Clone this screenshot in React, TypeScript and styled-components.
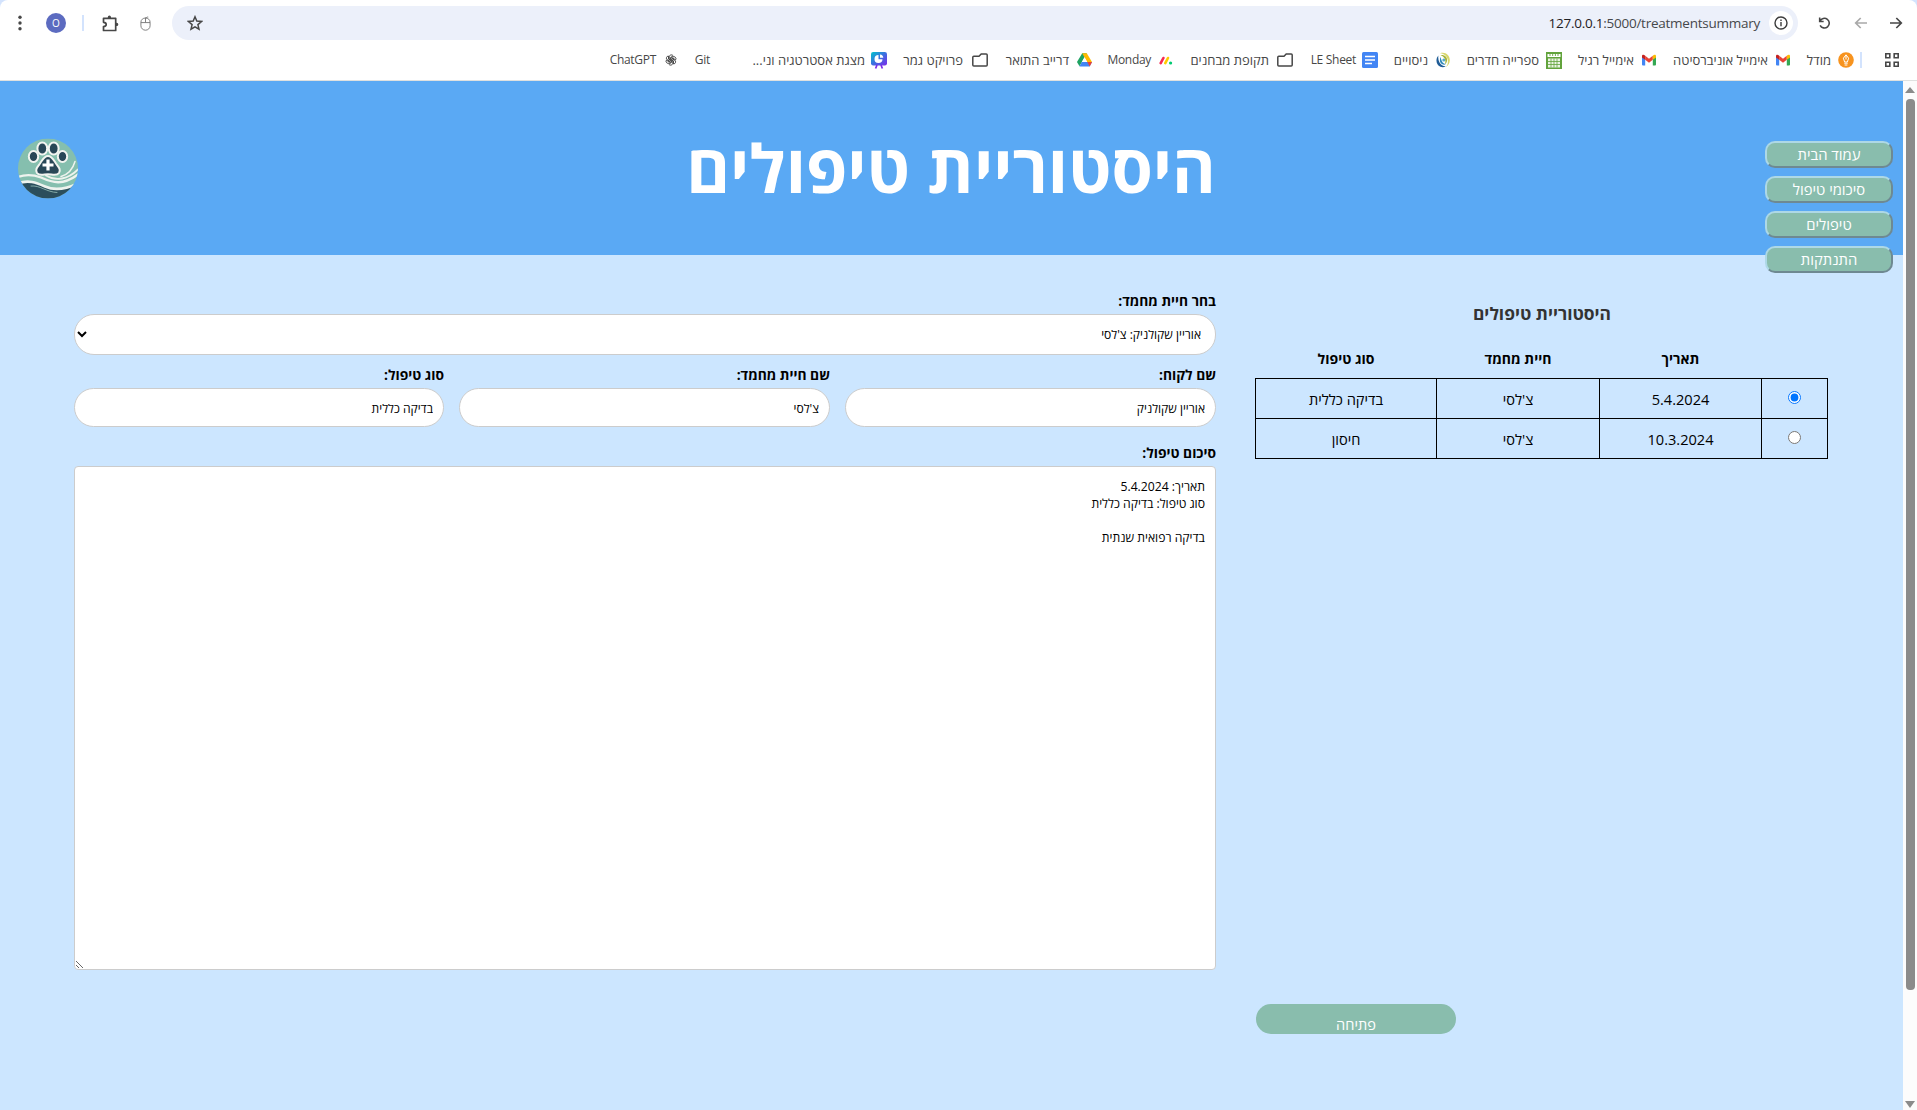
import React from "react";
import styled, { createGlobalStyle } from "styled-components";

const Global = createGlobalStyle`
  *, *::before, *::after { box-sizing: border-box; }
  html, body { margin: 0; padding: 0; }
  body { background: #cce6ff; overflow: hidden; font-family: "Open Sans", "Noto Sans", "DejaVu Sans", sans-serif; }
  button, input, select, textarea { font-family: inherit; }
`;

/* ---------- browser chrome ---------- */

const Window = styled.div`
  direction: rtl;
  width: 1917px;
  height: 1110px;
  display: flex;
  flex-direction: column;
  overflow: hidden;
  background: #d3e3fd;
`;

const Chrome = styled.header`
  height: 81px;
  flex: none;
  background: #fff;
  border-bottom: 1px solid #dfe1e0;
  border-radius: 8px 8px 0 0;
`;

const Toolbar = styled.div`
  height: 46px;
  display: flex;
  align-items: center;
  padding: 0 12px 0 11px;
`;

const ToolIcon = styled.span<{ $w: number; $gap?: number }>`
  display: flex;
  justify-content: center;
  flex: none;
  width: ${(p) => p.$w}px;
  margin-left: ${(p) => p.$gap ?? 0}px;
`;

const Omnibox = styled.div`
  flex: 1;
  height: 34px;
  border-radius: 17px;
  background: #ecf0fa;
  display: flex;
  align-items: center;
  padding: 0 5px 0 15px;
  margin-left: 17px;
`;

const InfoBadge = styled.span`
  width: 24px;
  height: 24px;
  border-radius: 50%;
  background: #fff;
  display: flex;
  align-items: center;
  justify-content: center;
`;

const Url = styled.span`
  direction: ltr;
  flex: 1;
  text-align: right;
  padding-right: 9px;
  font-size: 13.5px;
  color: #46484b;
  letter-spacing: -0.25px;
  b { font-weight: 400; color: #1f2023; }
`;

const Avatar = styled.span`
  width: 20px;
  height: 20px;
  margin-left: 17px;
  flex: none;
  border-radius: 50%;
  background: #5c6bc0;
  color: #fff;
  font-size: 10px;
  line-height: 20px;
  text-align: center;
`;

const Divider = styled.i<{ $m: string }>`
  width: 2px;
  height: 16px;
  flex: none;
  background: #d3e3fd;
  margin: ${(p) => p.$m};
`;

const Bookmarks = styled.nav`
  height: 28px;
  display: flex;
  align-items: center;
  padding-right: 17px;
`;

const Bookmark = styled.a<{ $w: number; $gap: number }>`
  width: ${(p) => p.$w}px;
  flex: none;
  display: flex;
  align-items: center;
  gap: ${(p) => p.$gap}px;
  color: #474747;
  white-space: nowrap;
`;

const BookmarkIcon = styled.span`
  width: 16px;
  flex: none;
  display: flex;
  justify-content: center;
`;

const BookmarkText = styled.span<{ $latin?: boolean }>`
  font-size: ${(p) => (p.$latin ? 12 : 13)}px;
  letter-spacing: ${(p) => (p.$latin ? -0.3 : 0)}px;
  line-height: 18px;
`;

/* ---------- page ---------- */

const Viewport = styled.div`
  flex: 1;
  min-height: 0;
  display: flex;
`;

const Page = styled.main`
  flex: 1;
  background: #cce6ff;
  display: flex;
  flex-direction: column;
`;

const Banner = styled.div`
  position: relative;
  height: 174px;
  flex: none;
  background: #5aa9f4;
  display: flex;
  align-items: center;
  justify-content: center;
`;

const Title = styled.h1`
  margin: 0;
  padding-left: 0;
  padding-right: 1px;
  color: #fff;
  font-size: 66.7px;
  font-weight: 700;
  line-height: 90px;
  white-space: nowrap;
`;

const Menu = styled.div`
  position: absolute;
  top: 60px;
  right: 10px;
  display: flex;
  flex-direction: column;
  gap: 8px;
`;

const MenuButton = styled.button`
  width: 128px;
  height: 27px;
  padding: 0;
  border: 2px outset lightblue;
  border-radius: 10px;
  background: #89bdad;
  color: #fff;
  font-size: 14.8px;
  line-height: 23px;
`;

const Logo = styled.div`
  position: absolute;
  left: 18px;
  top: 57px;
  width: 60px;
  height: 60px;
`;

const Content = styled.div`
  display: flex;
  justify-content: space-between;
  padding: 32px 75px 0 74px;
`;

const History = styled.section`
  width: 572px;
  height: 747px;
  display: flex;
  flex-direction: column;
`;

const HistoryTitle = styled.h2`
  margin: 14px 0 0;
  text-align: center;
  font-size: 17.4px;
  line-height: 24px;
  font-weight: 700;
  color: #333;
`;

const Table = styled.table`
  margin-top: 14px;
  width: 572px;
  table-layout: fixed;
  border-collapse: collapse;
  font-size: 14px;
  color: #000;
`;

const Th = styled.th`
  height: 39px;
  padding: 2px 0 0;
  font-weight: 700;
  line-height: 20px;
`;

const Td = styled.td`
  height: 40px;
  padding: 2px 0 0;
  border: 1px solid #000;
  text-align: center;
  font-size: 14.6px;
  line-height: 20px;
`;

const Radio = styled.input`
  display: block;
  width: 13px;
  height: 13px;
  margin: 0 auto 3px;
`;

const OpenButton = styled.button`
  margin: auto auto 0 0;
  width: 200px;
  height: 30px;
  padding: 9px 0 0;
  border: 0;
  border-radius: 15px;
  background: #89bdad;
  color: #fff;
  font-size: 14.6px;
  line-height: 20px;
`;

const Form = styled.form`
  width: 1142px;
  display: flex;
  flex-direction: column;
`;

const Label = styled.label`
  display: block;
  height: 27px;
  line-height: 27px;
  font-size: 13.8px;
  font-weight: 700;
  color: #000;
  white-space: nowrap;
`;

const Select = styled.select`
  height: 41px;
  width: 100%;
  padding: 0 10px;
  border: 1px solid #ccc;
  border-radius: 20px;
  background: #fff;
  color: #000;
  font-size: 12.1px;
`;

const Fields = styled.div`
  display: grid;
  grid-template-columns: 371px 371px 370px;
  column-gap: 15px;
  margin: 6px 0 12px;
`;

const Field = styled.div`
  min-width: 0;
`;

const Input = styled.input`
  display: block;
  width: 100%;
  height: 39px;
  padding: 1px 10px 0;
  border: 1px solid #ccc;
  border-radius: 20px;
  background: #fff;
  color: #000;
  font-size: 12.1px;
`;

const Summary = styled.textarea`
  height: 504px;
  padding: 11px 10px 10px;
  border: 1px solid #ccc;
  border-radius: 4px;
  background: #fff;
  color: #000;
  font-size: 12.2px;
  line-height: 17px;
  outline: none;
`;

const ScrollTrack = styled.div`
  width: 14px;
  flex: none;
  background: #fcfcfc;
  display: flex;
  flex-direction: column;
  align-items: center;
  padding: 6px 0 2px;
`;

const Thumb = styled.div`
  width: 9px;
  height: 891px;
  margin: 6px 0 auto;
  border-radius: 4px;
  background: #8b8b8b;
`;

/* ---------- drawings ---------- */

const ink = "#474747";

const Gmail = () => (
  <svg width="14" height="12" viewBox="0 0 14 11">
    <path d="M0 1.5V10a1 1 0 0 0 1 1h2.2V4z" fill="#4285f4" />
    <path d="M14 1.500V10a1 1 0 0 1-1 1h-2.200V4z" fill="#34a853" />
    <path d="M3.200 1.200 7 4.200l3.800-3v4L7 8.200l-3.800-3z" fill="#ea4335" />
    <path d="M0 1.500C0 .2 1.600-.4 3.200 1.200v4L0 2.900z" fill="#c5221f" />
    <path d="M14 1.500C14 .2 12.400-.4 10.800 1.200v4L14 2.900z" fill="#fbbc04" />
  </svg>
);

const Folder = () => (
  <svg width="16" height="14" viewBox="0 0 16 14" fill="none" stroke={ink} strokeWidth="1.500">
    <path d="M.8 12V4.300q0-1 1-1H7L9.200 1h5q1 0 1 1v10q0 1-1 1H1.800q-1 0-1-1z" />
  </svg>
);

const Moodle = () => (
  <svg width="16" height="16" viewBox="0 0 16 16">
    <circle cx="8" cy="8" r="7.800" fill="#f7931e" />
    <path d="M8 2.800 5.400 6.200 6.600 10h2.800l1.200-3.800zM8 3v4.500" fill="none" stroke="#fff" strokeWidth="1" />
    <path d="M6.300 11.200h3.400M6.600 13h2.800" stroke="#fff" strokeWidth="1" />
  </svg>
);

const Calendar = () => (
  <svg width="16" height="17" viewBox="0 0 16 17">
    <rect width="16" height="17" fill="#62a33c" />
    <path d="M1.500 2h13v3h-13z" fill="#fff" />
    <path d="M4 1v3M6.700 1v3M9.400 1v3M12 1v3" stroke="#62a33c" strokeWidth=".9" />
    <rect x="2" y="6.500" width="12" height="9" fill="#e9f3e2" />
    <path d="M2 9.500h12M2 12.500h12M5 6.500v9M8 6.500v9M11 6.500v9" stroke="#62a33c" strokeWidth=".8" />
  </svg>
);

const Swirl = () => (
  <svg width="14" height="16" viewBox="0 0 14 16">
    <path d="M4 1.200C9.500-.8 14 3.500 13.800 8.500c-.2 3.200-1.800 5.500-4.300 6.700 2-2.200 2.700-4.200 2.300-7C11.300 4.500 8.500 1.800 4 1.200z" fill="#d9d76c" />
    <path d="M4.500 3.200c3.800-.7 6.700 1.800 6.600 5-.1 2-1 3.300-2.200 4 .7-2.200.7-3.800-.3-5.600-.9-1.700-2.200-2.700-4.100-3.400z" fill="#a8b53a" />
    <path d="M2.400 3.500C-.8 7 0 12.800 4.500 14.800c1.800.7 4 .4 5.300-.6-3 0-5-1.300-6.300-3.700C2.300 8.300 2 6 2.400 3.500z" fill="#1f5c96" />
    <path d="M4.800 5c-1.600 2.700-1 6 1.600 7.300 1.200.6 2.500.5 3.400-.2-1.700-.4-3-1.300-3.800-2.700C5.200 8 4.900 6.600 4.800 5z" fill="#2d87b9" />
    <circle cx="7.800" cy="8" r="1.500" fill="#59abc9" />
  </svg>
);

const Docs = () => (
  <svg width="16" height="16" viewBox="0 0 16 16">
    <rect width="16" height="16" rx="1.500" fill="#4285f4" />
    <path d="M3 4.500h10M3 8h10M3 11.500h7" stroke="#fff" strokeWidth="1.500" />
  </svg>
);

const MondayMark = () => (
  <svg width="14" height="9" viewBox="0 0 14 9" strokeLinecap="round" strokeWidth="2.600">
    <path d="M1.700 7.200 4.400 2" stroke="#f62b54" />
    <path d="M6.300 7.200 9 2" stroke="#ffcc00" />
    <circle cx="11.600" cy="7" r="1.600" fill="#00ca72" />
  </svg>
);

const Drive = () => (
  <svg width="15" height="14" viewBox="0 0 15 14">
    <path d="M5.200.3h4.600L5 8.800 2.500 13.200 0 9z" fill="#1ea362" />
    <path d="M5.200.3h4.600L15 9h-4.800z" fill="#ffba00" />
    <path d="M4.800 9H15l-2.300 4.500H2.400z" fill="#4285f4" />
    <path d="M12.700 13.500 15 9h-4.700z" fill="#ea4335" />
    <path d="M7.500 4.300 4.900 9h5.200z" fill="#fff" />
  </svg>
);

const DeckMark = () => (
  <svg width="16" height="17" viewBox="0 0 16 17">
    <defs>
      <linearGradient id="deck" x1="0" y1="0" x2="1" y2="1">
        <stop offset="0" stopColor="#00c4cc" />
        <stop offset=".5" stopColor="#3d6fe0" />
        <stop offset="1" stopColor="#7d2ae8" />
      </linearGradient>
    </defs>
    <rect width="16" height="13.500" rx="2.200" fill="url(#deck)" />
    <path d="M6 13 4.600 16.500M10 13l1.400 3.500" stroke="#7d2ae8" strokeWidth="1.700" />
    <path d="M7.500 3a4 4 0 1 0 4 4.200H7.500z" fill="#fff" />
    <path d="M9 2.400a3.600 3.600 0 0 1 3.300 3.300H9z" fill="#fff" />
  </svg>
);

const GptMark = () => (
  <svg width="12" height="12" viewBox="0 0 14 14" fill="none" stroke="#3d3d3d" strokeWidth="1">
    {[0, 60, 120, 180, 240, 300].map((a) => (
      <path key={a} transform={`rotate(${a} 7 7)`} d="M5 7V3.200a2.400 2.400 0 0 1 4.500-1L6.500 4v3" />
    ))}
  </svg>
);

const PawLogo = () => (
  <svg width="60" height="61" viewBox="0 0 60 60">
    <defs>
      <clipPath id="disc"><circle cx="30" cy="30" r="30" /></clipPath>
    </defs>
    <g clipPath="url(#disc)">
      <rect width="60" height="60" fill="#85bfae" />
      <path d="M0 45c10-4 18-1 27 3s19 4 33-3v15H0z" fill="#2b4e5c" />
      <g fill="none" stroke="#eef3ee" strokeLinecap="round">
        <path d="M0 38.500c8-3 15-2.500 23 .5 12 5.500 22 8 37-3" strokeWidth="2.400" />
        <path d="M0 45c10-4 18-1 27 3s19 3.500 33-3" strokeWidth="2.600" />
        <path d="M28 37c10 6 22 4 32-6" strokeWidth="1.800" />
        <path d="M43 38c7-2 12-8 14-15" strokeWidth="1.500" />
        <path d="M13 47.500c9-1 15 6 26 6.500" strokeWidth=".9" stroke="#8fb6b0" />
      </g>
      <g fill="#294757" stroke="#f2f4f0" strokeWidth="2">
        <path d="M30 17.500c4 0 5.500 4 8 7.500 3 4 5 6 3 9.500-2.500 3.500-7 1.200-11 1.200s-8.500 2.300-11-1.200c-2-3.500 0-5.500 3-9.500 2.500-3.500 4-7.500 8-7.500z" />
        <ellipse cx="24.300" cy="10" rx="4.900" ry="6.100" />
        <ellipse cx="35.700" cy="10" rx="4.900" ry="6.100" />
        <ellipse cx="15.500" cy="18" rx="4.700" ry="5.500" />
        <ellipse cx="44.500" cy="18" rx="4.700" ry="5.500" />
      </g>
      <path d="M30 21v11M24.500 26.500h11" stroke="#fff" strokeWidth="3.200" />
    </g>
  </svg>
);

/* ---------- data ---------- */

type Mark = { text: string; icon?: React.ReactNode; w: number; gap?: number; latin?: boolean };

const marks: Mark[] = [
  { text: "מודל", icon: <Moodle />, w: 63 },
  { text: "אימייל אוניברסיטה", icon: <Gmail />, w: 134 },
  { text: "אימייל רגיל", icon: <Gmail />, w: 95 },
  { text: "ספרייה חדרים", icon: <Calendar />, w: 111 },
  { text: "ניסויים", icon: <Swirl />, w: 73 },
  { text: "LE Sheet", icon: <Docs />, w: 85, gap: 6, latin: true },
  { text: "תקופת מבחנים", icon: <Folder />, w: 119, gap: 8 },
  { text: "Monday", icon: <MondayMark />, w: 82, latin: true },
  { text: "דרייב התואר", icon: <Drive />, w: 104 },
  { text: "פרויקט גמר", icon: <Folder />, w: 101, gap: 9 },
  { text: "מצגת אסטרטגיה וני...", icon: <DeckMark />, w: 177, gap: 6 },
  { text: "Git", w: 31, latin: true },
  { text: "ChatGPT", icon: <GptMark />, w: 80, latin: true },
];

const visits = [
  { date: "5.4.2024", pet: "צ'לסי", kind: "בדיקה כללית" },
  { date: "10.3.2024", pet: "צ'לסי", kind: "חיסון" },
];

const summary = "תאריך: 5.4.2024\nסוג טיפול: בדיקה כללית\n\nבדיקה רפואית שנתית";

export default function App() {
  const [picked, setPicked] = React.useState(0);
  return (
    <Window>
      <Global />
      <Chrome>
        <Toolbar>
          <ToolIcon $w={18} $gap={17}>
            <svg width="14" height="12" viewBox="0 0 14 12" fill="none" stroke={ink} strokeWidth="1.700"><path d="M1 6h11M7.300 1 12.300 6l-5 5" /></svg>
          </ToolIcon>
          <ToolIcon $w={18} $gap={19}>
            <svg width="14" height="12" viewBox="0 0 14 12" fill="none" stroke="#a9a9a9" strokeWidth="1.700"><path d="M13 6H2M6.700 1 1.700 6l5 5" /></svg>
          </ToolIcon>
          <ToolIcon $w={18} $gap={17}>
            <svg width="13" height="14" viewBox="0 0 14 14" fill="none" stroke={ink} strokeWidth="1.700"><path d="M1.800 1v4.300h4.300M2.200 5A5.200 5.200 0 1 1 2.300 9.500" /></svg>
          </ToolIcon>
          <Omnibox>
            <InfoBadge>
              <svg width="14" height="14" viewBox="0 0 14 14" fill="none" stroke="#3c3c3c" strokeWidth="1.400"><circle cx="7" cy="7" r="6" /><path d="M7 6v4.200M7 3.500v1.500" /></svg>
            </InfoBadge>
            <Url><b>127.0.0.1</b>:5000/treatmentsummary</Url>
            <svg width="16" height="16" viewBox="0 0 16 16" fill="none" stroke={ink} strokeWidth="1.500"><path d="m8 1.800 1.800 4.300 4.700.4-3.600 3.100 1.100 4.600L8 11.800l-4 2.400 1.100-4.600-3.600-3.100 4.700-.4z" /></svg>
          </Omnibox>
          <ToolIcon $w={20} $gap={15}>
            <svg width="11" height="15" viewBox="0 0 12 16" fill="none" stroke="#777" strokeWidth="1"><path d="M1 7h10v3.500a5 4.800 0 0 1-10 0V6.500a5 4.500 0 0 1 10 0V7M6 7V1.500M6 3.500a2.500 2.500 0 0 1 3-2.500" /></svg>
          </ToolIcon>
          <ToolIcon $w={20} $gap={16}>
            <svg width="17" height="17" viewBox="0 0 17 17" fill="none" stroke={ink} strokeWidth="1.700"><path d="M1.500 3.300h12.200v12.200H1.500v-4q2.700-.2 2.700-2.100T1.500 7.300z" strokeLinejoin="round" /><path d="M5.800 3V2.200a1.600 1.600 0 0 1 3.200 0V3zM14 7.800h.7a1.600 1.600 0 0 1 0 3.200H14z" fill={ink} stroke="none" /></svg>
          </ToolIcon>
          <Divider $m="0 0 0 16px" />
          <Avatar>O</Avatar>
          <ToolIcon $w={18}>
            <svg width="4" height="16" viewBox="0 0 4 16" fill={ink}>
              <circle cx="2" cy="2.200" r="1.700" /><circle cx="2" cy="8" r="1.700" /><circle cx="2" cy="13.800" r="1.700" />
            </svg>
          </ToolIcon>
        </Toolbar>
        <Bookmarks>
          <svg width="16" height="16" viewBox="0 0 16 16" fill="none" stroke={ink} strokeWidth="1.600"><path d="M1.800 1.800h4v4h-4zM10.200 1.800h4v4h-4zM1.800 10.200h4v4h-4zM10.200 10.200h4v4h-4z" /></svg>
          <Divider $m="0 22px 0 6px" />
          {marks.map((m) => (
            <Bookmark key={m.text} $w={m.w} $gap={m.gap ?? 7}>
              {m.icon && <BookmarkIcon>{m.icon}</BookmarkIcon>}
              <BookmarkText $latin={m.latin}>{m.text}</BookmarkText>
            </Bookmark>
          ))}
        </Bookmarks>
      </Chrome>
      <Viewport>
        <ScrollTrack>
          <svg width="10" height="6" viewBox="0 0 10 6"><path d="M5 0 10 6H0z" fill="#8b8b8b" /></svg>
          <Thumb />
          <svg width="10" height="7" viewBox="0 0 10 7"><path d="M0 0h10L5 7z" fill="#8b8b8b" /></svg>
        </ScrollTrack>
        <Page>
          <Banner>
            <Menu>
              <MenuButton>עמוד הבית</MenuButton>
              <MenuButton>סיכומי טיפול</MenuButton>
              <MenuButton>טיפולים</MenuButton>
              <MenuButton>התנתקות</MenuButton>
            </Menu>
            <Title>היסטוריית טיפולים</Title>
            <Logo><PawLogo /></Logo>
          </Banner>
          <Content>
            <History>
              <HistoryTitle>היסטוריית טיפולים</HistoryTitle>
              <Table>
                <colgroup><col width="66" /><col width="162" /><col width="163" /><col width="181" /></colgroup>
                <thead>
                  <tr><Th /><Th>תאריך</Th><Th>חיית מחמד</Th><Th>סוג טיפול</Th></tr>
                </thead>
                <tbody>
                  {visits.map((v, i) => (
                    <tr key={v.date}>
                      <Td><Radio type="radio" name="visit" checked={picked === i} onChange={() => setPicked(i)} /></Td>
                      <Td>{v.date}</Td>
                      <Td>{v.pet}</Td>
                      <Td>{v.kind}</Td>
                    </tr>
                  ))}
                </tbody>
              </Table>
              <OpenButton>פתיחה</OpenButton>
            </History>
            <Form>
              <Label>בחר חיית מחמד:</Label>
              <Select><option>אוריין שקולניק: צ'לסי</option></Select>
              <Fields>
                <Field><Label>שם לקוח:</Label><Input defaultValue="אוריין שקולניק" /></Field>
                <Field><Label>שם חיית מחמד:</Label><Input defaultValue="צ'לסי" /></Field>
                <Field><Label>סוג טיפול:</Label><Input defaultValue="בדיקה כללית" /></Field>
              </Fields>
              <Label>סיכום טיפול:</Label>
              <Summary defaultValue={summary} />
            </Form>
          </Content>
        </Page>
      </Viewport>
    </Window>
  );
}
